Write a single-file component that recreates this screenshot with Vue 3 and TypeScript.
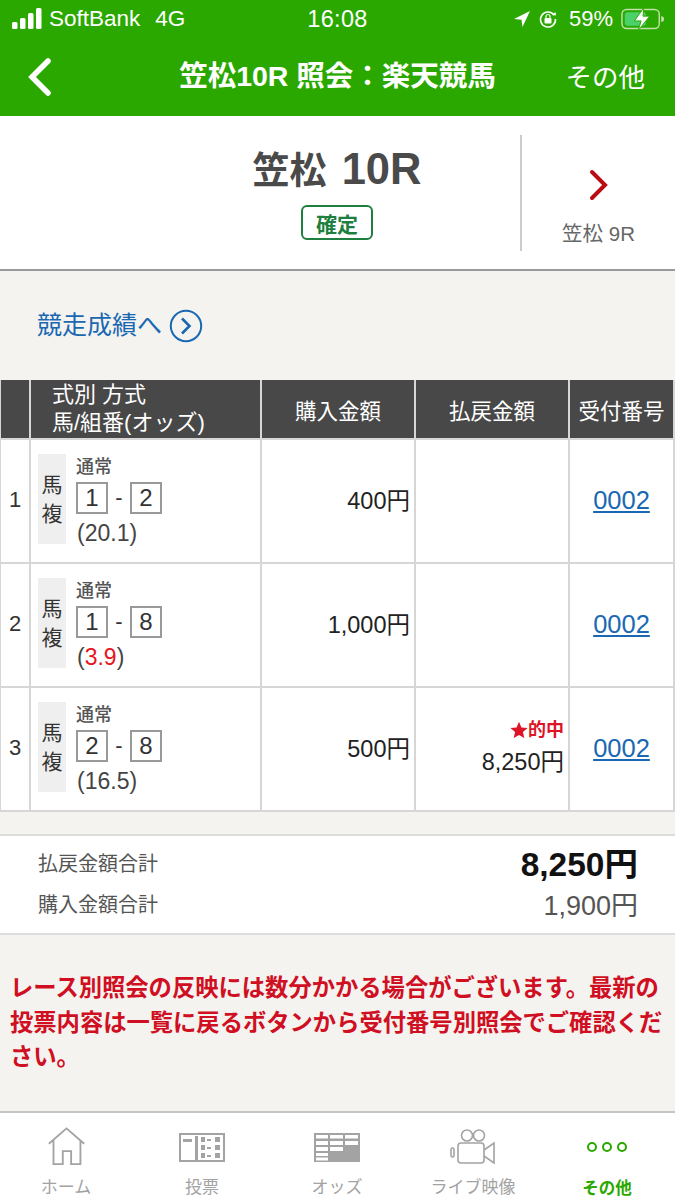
<script setup lang="ts">
interface Row { no: number; a: number; b: number; odds: string; hot: boolean; amount: string; hit: boolean; pay: string }
const rows: Row[] = [
  { no: 1, a: 1, b: 2, odds: '20.1', hot: false, amount: '400円', hit: false, pay: '' },
  { no: 2, a: 1, b: 8, odds: '3.9', hot: true, amount: '1,000円', hit: false, pay: '' },
  { no: 3, a: 2, b: 8, odds: '16.5', hot: false, amount: '500円', hit: true, pay: '8,250円' },
]
</script>

<template>
  <div class="page">
    <header class="head">
      <div class="status">
        <div class="st-left">
          <svg width="31" height="22" viewBox="0 0 31 22"><rect x="0" y="14" width="5.5" height="7" rx="1.5" fill="#fff"/><rect x="8" y="10" width="5.5" height="11" rx="1.5" fill="#fff"/><rect x="16" y="5" width="5.5" height="16" rx="1.5" fill="#fff"/><rect x="24" y="0" width="5.5" height="21" rx="1.5" fill="#fff"/></svg>
          <span class="carrier">SoftBank</span><span class="net">4G</span>
        </div>
        <div class="time">16:08</div>
        <div class="st-right">
          <svg width="18" height="18" viewBox="0 0 18 18"><path d="M17 1 L1 9 L8.5 9.8 L9.5 17 Z" fill="#fff"/></svg>
          <svg class="lock" width="20" height="20" viewBox="0 0 20 20"><path d="M16 6 A7.5 7.5 0 1 0 17.5 10" fill="none" stroke="#fff" stroke-width="1.6"/><path d="M14 6 L18 6.5 L17.5 3 Z" fill="#fff"/><rect x="6.5" y="9" width="7" height="5.5" rx="1" fill="#fff"/><path d="M8 9 V7.5 a2 2 0 0 1 4 0 V9" fill="none" stroke="#fff" stroke-width="1.2"/></svg>
          <span class="pct">59%</span>
          <svg width="44" height="24" viewBox="0 0 46 24"><rect x="1" y="2" width="39" height="20" rx="5" fill="none" stroke="#bfe0a8" stroke-width="1.5"/><rect x="4" y="5" width="22" height="14" rx="2.5" fill="#4cd16a"/><path d="M42 9 a3 3 0 0 1 0 6 Z" fill="#bfe0a8"/><path d="M24 0 L14 14 H21 L18 24 L30 9 H23 Z" fill="#fff" stroke="#2aa800" stroke-width="1"/></svg>
        </div>
      </div>
      <nav class="nav">
        <svg class="back" width="26" height="38" viewBox="0 0 26 38"><path d="M21 3 L5 19 L21 35" fill="none" stroke="#fff" stroke-width="5.5" stroke-linecap="round"/></svg>
        <h1 class="title">笠松10R 照会：楽天競馬</h1>
        <span class="other">その他</span>
      </nav>
    </header>

    <section class="race">
      <div class="race-main">
        <div class="race-name"><span class="race-kanji">笠松</span> 10R</div>
        <div class="badge">確定</div>
      </div>
      <div class="race-next">
        <svg width="20" height="32" viewBox="0 0 20 32"><path d="M3 3 L16 16 L3 29" fill="none" stroke="#b80d12" stroke-width="4" stroke-linecap="round"/></svg>
        <span class="next-label">笠松 9R</span>
      </div>
    </section>

    <main class="body">
      <div class="link-row">
        <a class="result-link">競走成績へ</a>
        <svg width="34" height="34" viewBox="0 0 34 34"><circle cx="17" cy="17" r="15.2" fill="none" stroke="#1a68b2" stroke-width="2"/><path d="M13 9.5 L20.5 17 L13 24.5" fill="none" stroke="#1a68b2" stroke-width="2.6"/></svg>
      </div>

      <div class="table">
        <div class="th"></div>
        <div class="th th-left"><span>式別 方式</span><span>馬/組番(オッズ)</span></div>
        <div class="th">購入金額</div>
        <div class="th">払戻金額</div>
        <div class="th">受付番号</div>
        <template v-for="r in rows" :key="r.no">
          <div class="td td-no">{{ r.no }}</div>
          <div class="td td-bet">
            <div class="kind">馬<br>複</div>
            <div class="bet">
              <div class="method">通常</div>
              <div class="nums"><span class="box">{{ r.a }}</span><span class="dash">-</span><span class="box">{{ r.b }}</span></div>
              <div class="odds">(<span :class="{ hot: r.hot }">{{ r.odds }}</span>)</div>
            </div>
          </div>
          <div class="td td-money">{{ r.amount }}</div>
          <div class="td td-money td-pay">
            <span v-if="r.hit" class="hit"><svg width="18" height="18" viewBox="0 0 24 24"><path d="M12 1 L15.2 8.6 L23.5 9.3 L17.2 14.7 L19.1 22.8 L12 18.5 L4.9 22.8 L6.8 14.7 L.5 9.3 L8.8 8.6 Z" fill="#dc1426"/></svg>的中</span>
            <span v-if="r.pay">{{ r.pay }}</span>
          </div>
          <div class="td td-code"><a class="code">0002</a></div>
        </template>
      </div>

      <div class="summary">
        <div class="sum-row"><span class="sum-label">払戻金額合計</span><strong class="sum-big">8,250円</strong></div>
        <div class="sum-row"><span class="sum-label">購入金額合計</span><span class="sum-val">1,900円</span></div>
      </div>

      <p class="notice">レース別照会の反映には数分かかる場合がございます。最新の投票内容は一覧に戻るボタンから受付番号別照会でご確認ください。</p>
    </main>

    <footer class="tabs">
      <div class="tab">
        <svg width="41" height="39" viewBox="0 0 44 42"><path d="M3 18 L22 1.5 L41 18 M8 14 V40 H18 V26 H27 V40 H37 V14" fill="none" stroke="#a3a3a3" stroke-width="2"/></svg>
        <span>ホーム</span>
      </div>
      <div class="tab tab-box">
        <svg width="46" height="30" viewBox="0 0 46 30"><rect x="1" y="1" width="44" height="27" fill="none" stroke="#a3a3a3" stroke-width="2"/><g fill="#a3a3a3"><rect x="4" y="6" width="9" height="3"/><rect x="16" y="3" width="3" height="24"/><rect x="22" y="4" width="4" height="5"/><rect x="28" y="6" width="4" height="2"/><rect x="36" y="4" width="5" height="5"/><rect x="22" y="12" width="4" height="5"/><rect x="28" y="14" width="4" height="2"/><rect x="36" y="12" width="5" height="5"/><rect x="22" y="20" width="4" height="5"/><rect x="28" y="22" width="4" height="2"/><rect x="36" y="20" width="5" height="5"/></g></svg>
        <span>投票</span>
      </div>
      <div class="tab tab-box">
        <svg width="46" height="30" viewBox="0 0 46 30"><rect x="0" y="0" width="46" height="29" fill="#a3a3a3"/><g fill="#fff"><rect x="2" y="2" width="12" height="3.5"/><rect x="16" y="2" width="13" height="3.5"/><rect x="31" y="2" width="13" height="3.5"/><rect x="2" y="8" width="12" height="4"/><rect x="16" y="8" width="13" height="4"/><rect x="31" y="8" width="13" height="4"/><rect x="2" y="14" width="12" height="4"/><rect x="16" y="14" width="13" height="4"/><rect x="2" y="20" width="12" height="3"/><rect x="2" y="24.5" width="12" height="3"/></g></svg>
        <span>オッズ</span>
      </div>
      <div class="tab">
        <svg width="46" height="38" viewBox="0 0 46 38"><g fill="none" stroke="#a3a3a3" stroke-width="1.6"><circle cx="17" cy="7.5" r="5.5"/><circle cx="29" cy="7.5" r="5.5"/><rect x="8" y="15" width="26" height="20" rx="3"/><path d="M34 22 L44 15 V35 L34 28"/><rect x="1" y="20" width="3" height="9" rx="1.5"/></g></svg>
        <span>ライブ映像</span>
      </div>
      <div class="tab tab-on">
        <svg class="dots" width="40" height="14" viewBox="2 0 40 14"><g fill="none" stroke="#2aa800" stroke-width="2"><circle cx="7" cy="7" r="4"/><circle cx="22" cy="7" r="4"/><circle cx="37" cy="7" r="4"/></g></svg>
        <span>その他</span>
      </div>
    </footer>
  </div>
</template>

<style>
html, body { margin: 0; padding: 0; background: #f4f3f0; }
</style>

<style scoped>
.page {
  width: 675px; height: 1200px; display: flex; flex-direction: column; overflow: hidden;
  background: #f4f3f0; color: #222;
  font-family: "Liberation Sans", "Noto Sans CJK JP", sans-serif;
}
.head { height: 116px; background: #2aa800; color: #fff; flex: none; }
.status { height: 38px; display: flex; align-items: center; justify-content: space-between; padding: 0 10px 0 12px; position: relative; }
.st-left, .st-right { display: flex; align-items: center; }
.carrier { font-size: 22.5px; margin-left: 6px; }
.net { font-size: 22.5px; margin-left: 15px; }
.time { position: absolute; left: 0; right: 0; text-align: center; font-size: 23.5px; font-weight: 500; letter-spacing: .3px; }
.st-right { gap: 10px; }
.lock { margin-left: -3px; }
.pct { font-size: 22px; margin-left: 1px; margin-right: -2px; }
.nav { height: 77px; display: flex; align-items: center; position: relative; padding: 0 30px 0 27px; justify-content: space-between; }
.title { position: absolute; left: 0; top: 24px; width: 675px; text-align: center; margin: 0; font-size: 28.5px; font-weight: 700; line-height: 1; }
.other { font-size: 26.5px; font-weight: 400; margin-top: -3px; }

.race { background: #fff; border-bottom: 2px solid #999; box-sizing: border-box; display: flex; flex: none; padding-top: 19px; padding-bottom: 18px; height: 155px; }
.race-main { flex: 1; display: flex; flex-direction: column; align-items: center; padding-left: 154px; box-sizing: border-box; }
.race-name { font-size: 43.5px; font-weight: 700; color: #4a4a4a; line-height: 68px; height: 70px; white-space: nowrap; }
.race-kanji { font-size: 37px; margin-right: 3px; }
.badge { width: 72px; height: 35px; box-sizing: border-box; border: 2px solid #1f7f3f; border-radius: 6px; color: #1f7f3f; font-size: 21px; font-weight: 700; display: flex; align-items: center; justify-content: center; }
.race-next { width: 155px; border-left: 2px solid #ccc; display: flex; flex-direction: column; align-items: center; box-sizing: border-box; padding-top: 34px; }
.next-label { font-size: 20.5px; color: #666; margin-top: 20px; line-height: 26px; }

.body { flex: 1; }
.link-row { height: 109px; display: flex; align-items: center; padding-left: 37px; gap: 7px; }
.result-link { color: #1a68b2; font-size: 25px; line-height: 1; }

.table {
  display: grid; grid-template-columns: 28px 229px 152px 152px 103px; grid-template-rows: 58px repeat(3, 122px);
  gap: 2px; background: #d6d6d6; width: 675px; box-sizing: border-box;
  padding: 0 2px 2px 1px;
  margin-bottom: 22px;
}
.th { background: #484848; color: #fff; font-size: 21.5px; display: flex; align-items: center; justify-content: center; }
.th-left { flex-direction: column; align-items: flex-start; padding-left: 21px; line-height: 28px; font-size: 22px; }
.td { background: #fff; display: flex; align-items: center; }
.td-no { justify-content: center; font-size: 22px; color: #333; padding-bottom: 2px; }
.td-bet { padding-left: 7px; gap: 10px; }
.kind { width: 28px; height: 90px; margin-bottom: 4px; background: #efefef; display: flex; align-items: center; justify-content: center; text-align: center; font-size: 21px; line-height: 29px; color: #333; }
.bet { display: flex; flex-direction: column; }
.method { font-size: 18px; font-weight: 500; color: #555; line-height: 22px; margin-bottom: 4px; }
.nums { display: flex; align-items: center; height: 32px; }
.box { width: 32px; height: 32px; box-sizing: border-box; border: 2px solid #999; display: flex; align-items: center; justify-content: center; font-size: 24px; color: #333; }
.dash { width: 22px; text-align: center; font-size: 22px; color: #333; }
.odds { font-size: 23px; color: #444; line-height: 28px; margin-top: 5px; padding-left: 1px; }
.hot { color: #e8141e; }
.td-money { justify-content: flex-end; padding-right: 4px; padding-bottom: 4px; font-size: 23.5px; color: #222; }
.td-pay { flex-direction: column; align-items: flex-end; justify-content: center; }
.hit { display: flex; align-items: center; color: #dc1426; font-size: 18px; font-weight: 700; line-height: 26px; }
.td-code { justify-content: center; padding-bottom: 2px; }
.code { color: #1a68b2; font-size: 25.5px; text-decoration: underline; }

.summary { height: 101px; box-sizing: border-box; background: #fff; border-top: 2px solid #ddd; border-bottom: 2px solid #ddd; padding: 6px 37px 0 38px; }
.sum-row { display: flex; justify-content: space-between; align-items: center; height: 41px; }
.sum-label { font-size: 20px; color: #555; }
.sum-big { font-size: 33.5px; font-weight: 700; color: #111; margin-top: -3px; }
.sum-val { font-size: 27px; color: #555; }

.notice { margin: 36px 0 0; padding: 0 10px; color: #d00f22; font-size: 23.3px; font-weight: 700; line-height: 34.5px; }

.tabs { height: 89px; flex: none; background: #fff; border-top: 2px solid #c4c4c4; box-sizing: border-box; display: grid; grid-template-columns: 132px 140px 130px 142px 126px; }
.tab { display: flex; flex-direction: column; align-items: center; justify-content: flex-end; color: #a3a3a3; font-size: 17px; font-weight: 400; }
.tab svg { margin-bottom: 10px; }
.tab-box svg { margin-bottom: 13px; }
.tab span { line-height: 24px; margin-bottom: 0; }
.tab-on { color: #2aa800; font-weight: 700; font-size: 16.5px; }
.tab-on svg { margin-bottom: 22px; }
</style>
